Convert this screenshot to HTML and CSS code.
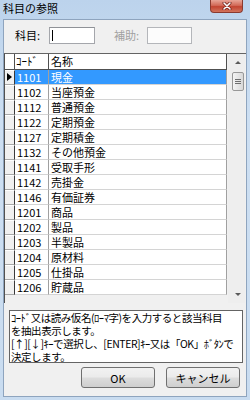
FILE: index.html
```html
<!DOCTYPE html>
<html lang="ja">
<head>
  <meta charset="UTF-8">
  <title>科目の参照</title>
  <link rel="stylesheet" href="styles.css">
</head>
<body>
  <div class="window">
    <div class="titlebar">
      <span class="title">科目の参照</span>
      <div class="close">
        <svg width="10" height="8" viewBox="0 0 10 8">
          <path d="M2 1 L8 7 M8 1 L2 7" stroke="#6b1d14" stroke-width="3" stroke-linecap="round"/>
          <path d="M2 1 L8 7 M8 1 L2 7" stroke="#ffffff" stroke-width="1.6" stroke-linecap="round"/>
        </svg>
      </div>
    </div>

    <div class="client">
      <div class="search">
        <label class="lbl">科目:</label>
        <div class="textbox"><span class="caret"></span></div>
        <label class="lbl lbl-off">補助:</label>
        <div class="textbox textbox-off"></div>
      </div>

      <div class="grid">
        <div class="rows" id="rows">
          <div class="row head">
            <div class="rh"></div>
            <div class="cell code">ｺｰﾄﾞ</div>
            <div class="cell name">名称</div>
          </div>
        </div>
        <div class="vscroll">
          <div class="arrow up"></div>
          <div class="thumb"><span></span><span></span><span></span></div>
          <div class="track"></div>
          <div class="arrow down"></div>
        </div>
      </div>

      <div class="hint">ｺｰﾄﾞ又は読み仮名(ﾛｰﾏ字)を入力すると該当科目<br>を抽出表示します。<br>[↑][↓]ｷｰで選択し、[ENTER]ｷｰ又は「OK」ﾎﾞﾀﾝで<br>決定します。</div>

      <div class="buttons">
        <button class="btn">OK</button>
        <button class="btn">キャンセル</button>
      </div>
    </div>
  </div>

  <script>
    const accounts = [
      ['1101', '現金'],
      ['1102', '当座預金'],
      ['1112', '普通預金'],
      ['1122', '定期預金'],
      ['1127', '定期積金'],
      ['1132', 'その他預金'],
      ['1141', '受取手形'],
      ['1142', '売掛金'],
      ['1146', '有価証券'],
      ['1201', '商品'],
      ['1202', '製品'],
      ['1203', '半製品'],
      ['1204', '原材料'],
      ['1205', '仕掛品'],
      ['1206', '貯蔵品']
    ];

    const rows = document.getElementById('rows');
    accounts.forEach(function (a, i) {
      const row = document.createElement('div');
      row.className = i === 0 ? 'row selected' : 'row';
      row.innerHTML =
        '<div class="rh"></div>' +
        '<div class="cell code">' + a[0] + '</div>' +
        '<div class="cell name">' + a[1] + '</div>';
      rows.appendChild(row);
    });
  </script>
</body>
</html>
```

FILE: styles.css
```css
body {
  margin: 0;
  font-family: "Noto Sans CJK JP", sans-serif;
  font-size: 11px;
  color: #000;
}

.window {
  width: 250px;
  height: 400px;
  box-sizing: border-box;
  padding: 0 3px 3px 3px;
  background: linear-gradient(#bcd3ec, #cddff2 30%, #c9dcf0);
  display: flex;
  flex-direction: column;
}

/* title bar */
.titlebar {
  height: 19px;
  display: flex;
  justify-content: space-between;
  align-items: flex-start;
  flex-shrink: 0;
}

.title {
  font-size: 11px;
  line-height: 14px;
  padding-top: 1px;
}

.close {
  width: 33px;
  height: 13px;
  margin-right: 4px;
  box-sizing: border-box;
  border: 1px solid #8a3a2f;
  border-top: none;
  border-radius: 0 0 4px 4px;
  background: linear-gradient(#e8a597, #d26a58 45%, #c24431 55%, #d2735c);
  display: flex;
  align-items: center;
  justify-content: center;
}

/* client area */
.client {
  flex: 1;
  background: #f0f0f0;
  border: 1px solid #8ea4be;
  display: flex;
  flex-direction: column;
}

.search {
  height: 33px;
  box-sizing: border-box;
  padding: 7px 0 0 11px;
  display: flex;
  align-items: flex-start;
}

.lbl {
  line-height: 17px;
  width: 34px;
}

.lbl-off {
  color: #a0a0a0;
  margin-left: 19px;
  width: 33px;
}

.textbox {
  width: 46px;
  height: 17px;
  box-sizing: border-box;
  background: #fff;
  border: 1px solid #a4a6ab;
  border-top-color: #8f9297;
  padding: 2px 0 0 2px;
}

.textbox-off {
  width: 45px;
  background: #fcfcfc;
  border-color: #b4b6ba;
}

.caret {
  display: block;
  width: 1px;
  height: 11px;
  background: #000;
}

/* data grid */
.grid {
  height: 250px;
  box-sizing: border-box;
  border-top: 1px solid #646464;
  border-left: 1px solid #505050;
  display: flex;
}

.rows {
  width: 222px;
}

.row {
  display: grid;
  grid-template-columns: 10px 34px 178px;
  height: 15px;
}

.row.head {
  height: 16px;
}

.rh {
  box-sizing: border-box;
  background: #f0f0f0;
  border-right: 1px solid #3a3a3a;
  border-bottom: 1px solid #a8a8a8;
  border-top: 1px solid #fff;
  position: relative;
}

.cell {
  box-sizing: border-box;
  background: #fff;
  border-right: 1px solid #a0a0a0;
  border-bottom: 1px solid #d4d4d4;
  padding-left: 2px;
  line-height: 14px;
  white-space: nowrap;
  overflow: hidden;
}

.head .cell,
.head .rh {
  background: #fff;
  border-top: none;
  border-bottom: 1px solid #505050;
  border-right: 1px solid #505050;
  line-height: 15px;
}

.head .code {
  padding-left: 1px;
}

.selected .cell {
  background: #3399ff;
  color: #fff;
}

.selected .rh::before {
  content: "";
  position: absolute;
  left: 2px;
  top: 2px;
  border-left: 5px solid #000;
  border-top: 4.5px solid transparent;
  border-bottom: 4.5px solid transparent;
}

/* vertical scrollbar */
.vscroll {
  width: 17px;
  margin-left: auto;
  margin-right: 1px;
  display: flex;
  flex-direction: column;
  background: #eeeeee;
}

.arrow {
  height: 17px;
  position: relative;
}

.arrow::before {
  content: "";
  position: absolute;
  left: 7px;
  border-left: 3px solid transparent;
  border-right: 3px solid transparent;
}

.arrow.up::before {
  top: 7px;
  border-bottom: 3px solid #5a5a5a;
}

.arrow.down::before {
  top: 7px;
  border-top: 3px solid #5a5a5a;
}

.thumb {
  height: 19px;
  width: 12px;
  margin: 1px 0 0 4px;
  box-sizing: border-box;
  border: 1px solid #989898;
  border-radius: 2px;
  background: linear-gradient(90deg, #f4f4f4, #e6e6e6 50%, #d8d8d8);
  display: flex;
  flex-direction: column;
  justify-content: center;
  gap: 1px;
  padding: 0 2px;
}

.thumb span {
  height: 1px;
  background: #6e6e6e;
}

.track {
  flex: 1;
}

/* hint text */
.hint {
  height: 53px;
  box-sizing: border-box;
  margin: 7px 3px 0 5px;
  padding: 0 0 0 1px;
  background: #fff;
  border: 1px solid #646464;
  font-size: 10.5px;
  line-height: 13px;
  white-space: nowrap;
  overflow: hidden;
  letter-spacing: -0.45px;
}

/* buttons */
.buttons {
  display: flex;
  justify-content: flex-end;
  gap: 11px;
  padding: 4px 6px 0 0;
}

.btn {
  width: 74px;
  height: 21px;
  font-family: "Noto Sans CJK JP", sans-serif;
  font-size: 11px;
  color: #000;
  border: 1px solid #707070;
  border-radius: 3px;
  background: linear-gradient(#f2f2f2, #ebebeb 48%, #dddddd 52%, #cfcfcf);
  padding: 0;
}
```
